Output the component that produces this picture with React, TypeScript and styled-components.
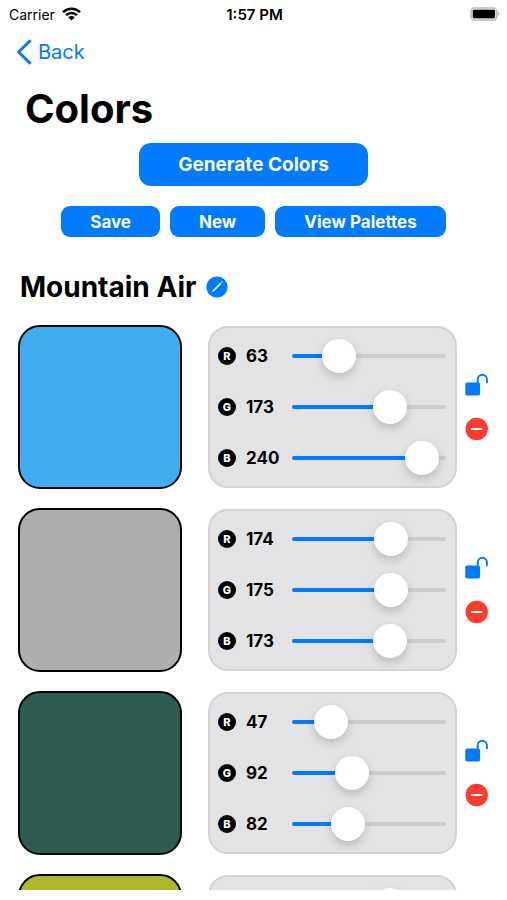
import React, { useState } from 'react';
import styled, { createGlobalStyle } from 'styled-components';

const BLUE = '#007aff';
const RED = '#ff3b30';

const GlobalStyle = createGlobalStyle`
  *, *::before, *::after { box-sizing: border-box; }
  body {
    margin: 0;
    background: #fff;
    color: #000;
    font-family: Inter, "Liberation Sans", sans-serif;
  }
  button, input { font: inherit; }
`;

const Screen = styled.div`
  display: flex;
  flex-direction: column;
  height: 100vh;
  padding-bottom: 10px;
`;

const StatusBar = styled.div`
  display: grid;
  grid-template-columns: 1fr auto 1fr;
  align-items: center;
  height: 28px;
  padding: 0 7px 0 9px;
  font-size: 14px;
  flex-shrink: 0;
`;

const Carrier = styled.div`
  display: flex;
  align-items: center;
  gap: 7px;
`;

const Clock = styled.time`
  font-size: 15px;
  font-weight: 600;
`;

const BatterySlot = styled.div`
  display: flex;
  justify-content: flex-end;
`;

const NavBar = styled.nav`
  display: flex;
  align-items: center;
  height: 48px;
  padding: 0 16px;
  flex-shrink: 0;
`;

const BackLink = styled.a`
  display: flex;
  align-items: center;
  gap: 6px;
  color: ${BLUE};
  font-size: 20px;
  text-decoration: none;
`;

const Title = styled.h1`
  margin: 8px 25px 0;
  font-size: 40px;
  line-height: 50px;
  font-weight: 700;
  flex-shrink: 0;
`;

const Actions = styled.div`
  display: flex;
  justify-content: center;
  gap: 10px;
  flex-shrink: 0;
`;

const PrimaryActions = styled(Actions)`
  margin-top: 9px;
`;

const SecondaryActions = styled(Actions)`
  margin-top: 20px;
`;

const ActionButton = styled.button<{ $large?: boolean }>`
  border: 0;
  border-radius: ${(p) => (p.$large ? 12 : 9)}px;
  padding: 0 ${(p) => (p.$large ? 39 : 29)}px;
  height: ${(p) => (p.$large ? 43 : 31)}px;
  background: ${BLUE};
  color: #fff;
  font-size: ${(p) => (p.$large ? 19 : 17)}px;
  font-weight: 700;
  white-space: nowrap;
  cursor: pointer;
`;

const PaletteHeader = styled.div`
  display: flex;
  align-items: center;
  gap: 10px;
  margin: 31px 20px 0;
  flex-shrink: 0;
`;

const PaletteName = styled.h2`
  margin: 0;
  font-size: 28px;
  line-height: 38px;
  font-weight: 700;
`;

const IconButton = styled.button`
  display: flex;
  border: 0;
  padding: 0;
  background: none;
  cursor: pointer;
`;

const ColorList = styled.ul`
  display: flex;
  flex-direction: column;
  gap: 19px;
  flex: 1;
  min-height: 0;
  margin: 19px 0 0;
  padding: 0 18px;
  list-style: none;
  overflow-y: auto;
  scrollbar-width: none;
`;

const ColorRow = styled.li`
  display: grid;
  grid-template-columns: 164px minmax(0, 1fr) 24px;
  column-gap: 8px;
  align-items: center;
  flex-shrink: 0;
`;

const Swatch = styled.div`
  height: 164px;
  border: 2px solid #000;
  border-radius: 22px;
`;

const ChannelPanel = styled.div`
  display: flex;
  flex-direction: column;
  justify-content: center;
  gap: 17px;
  height: 162px;
  margin-left: 18px;
  padding: 0 9px 0 8px;
  border: 2px solid #d3d3d5;
  border-radius: 20px;
  background: #e3e3e5;
`;

const Channel = styled.label`
  display: flex;
  align-items: center;
  height: 34px;
`;

const Badge = styled.span`
  display: flex;
  align-items: center;
  justify-content: center;
  width: 18px;
  height: 18px;
  margin-right: 10px;
  border-radius: 50%;
  background: #000;
  color: #fff;
  font-size: 11px;
  line-height: 18px;
  font-weight: 800;
`;

const Value = styled.output`
  width: 46px;
  font-size: 17px;
  font-weight: 700;
`;

const Slider = styled.input`
  appearance: none;
  flex: 1;
  min-width: 0;
  height: 34px;
  margin: 0;
  background: none;
  cursor: pointer;

  &::-webkit-slider-runnable-track {
    height: 4px;
    border-radius: 2px;
    background: linear-gradient(
      to right,
      ${BLUE} var(--filled),
      #cdcdd0 var(--filled)
    );
  }

  &::-webkit-slider-thumb {
    appearance: none;
    width: 34px;
    height: 34px;
    margin-top: -15px;
    border: 0;
    border-radius: 50%;
    background: #fff;
    box-shadow: 0 4px 10px rgba(0, 0, 0, 0.18);
  }
`;

const RowActions = styled.div`
  display: flex;
  flex-direction: column;
  align-items: center;
  gap: 21px;
`;

const WifiIcon = () => (
  <svg width="19" height="14" viewBox="0 0 19 14" aria-hidden="true">
    <g fill="none" stroke="#000" strokeWidth="2.5">
      <path d="M1 5.1a12.2 12.2 0 0 1 17 0" />
      <path d="M4 8.2a7.9 7.9 0 0 1 11 0" />
    </g>
    <path d="M9.5 13.6 6.2 10.3a4.8 4.8 0 0 1 6.6 0z" />
  </svg>
);

const BatteryIcon = () => (
  <svg width="30" height="14" viewBox="0 0 30 14" aria-hidden="true">
    <rect x="0.9" y="0.9" width="26" height="12.2" rx="3.8" fill="#dcdcdc" stroke="#b9b9b9" strokeWidth="1.4" />
    <rect x="2.8" y="2.8" width="22.2" height="8.4" rx="1.4" />
    <path d="M28 4.8c1.7.4 1.7 4 0 4.4z" fill="#b5b5b5" />
  </svg>
);

const BackIcon = () => (
  <svg width="16" height="26" viewBox="0 0 16 26" fill="none" stroke={BLUE} strokeWidth="3" aria-hidden="true">
    <path d="M14.6 1.2 2.6 13l12 11.8" strokeLinejoin="round" />
  </svg>
);

const EditIcon = () => (
  <svg width="22" height="22" viewBox="0 0 22 22" aria-hidden="true">
    <circle cx="11" cy="11" r="10.6" fill={BLUE} />
    <path d="M7.4 14.7 15 7.1" stroke="#fff" strokeWidth="1.6" />
    <path d="m6 16 .7-2 1.3 1.3zM15 5.8l1.3 1.3.4-.5c.5-.7-.6-1.8-1.2-1.2z" fill="#fff" />
  </svg>
);

const UnlockedIcon = () => (
  <svg width="24" height="23" viewBox="0 0 24 23" aria-hidden="true">
    <rect x="0.3" y="9.6" width="14.8" height="12.9" rx="1.8" fill={BLUE} />
    <path d="M12.7 10.5V6.3a4.6 4.6 0 0 1 9.2 0v3.1" fill="none" stroke={BLUE} strokeWidth="1.9" strokeLinecap="round" />
  </svg>
);

const RemoveIcon = () => (
  <svg width="24" height="24" viewBox="0 0 24 24" aria-hidden="true">
    <circle cx="11.7" cy="12" r="11.2" fill={RED} />
    <path d="M6.9 12h9.6" stroke="#fff" strokeWidth="2" strokeLinecap="round" />
  </svg>
);

type Rgb = [number, number, number];

const CHANNELS = ['R', 'G', 'B'];
const MAX = 255;
const THUMB = 34;

const MOUNTAIN_AIR: Rgb[] = [
  [63, 173, 240],
  [174, 175, 173],
  [47, 92, 82],
  [173, 184, 42],
];

const filledTo = (value: number) => {
  const ratio = value / MAX;
  return `calc(${THUMB / 2}px + (100% - ${THUMB}px) * ${ratio})`;
};

export default function App() {
  const [colors, setColors] = useState<Rgb[]>(MOUNTAIN_AIR);

  const setChannel = (row: number, channel: number, value: number) =>
    setColors((all) =>
      all.map((c, i) => (i === row ? (c.map((v, j) => (j === channel ? value : v)) as Rgb) : c)),
    );

  const removeColor = (row: number) => setColors((all) => all.filter((_, i) => i !== row));

  return (
    <>
      <GlobalStyle />
      <Screen>
        <StatusBar>
          <Carrier>
            Carrier <WifiIcon />
          </Carrier>
          <Clock>1:57 PM</Clock>
          <BatterySlot>
            <BatteryIcon />
          </BatterySlot>
        </StatusBar>
        <NavBar>
          <BackLink href="#back">
            <BackIcon />
            Back
          </BackLink>
        </NavBar>
        <Title>Colors</Title>
        <PrimaryActions>
          <ActionButton $large>Generate Colors</ActionButton>
        </PrimaryActions>
        <SecondaryActions>
          <ActionButton>Save</ActionButton>
          <ActionButton>New</ActionButton>
          <ActionButton>View Palettes</ActionButton>
        </SecondaryActions>
        <PaletteHeader>
          <PaletteName>Mountain Air</PaletteName>
          <IconButton aria-label="Rename palette">
            <EditIcon />
          </IconButton>
        </PaletteHeader>
        <ColorList>
          {colors.map((color, row) => (
            <ColorRow key={row}>
              <Swatch style={{ backgroundColor: `rgb(${color.join(',')})` }} />
              <ChannelPanel>
                {color.map((value, channel) => (
                  <Channel key={channel}>
                    <Badge>{CHANNELS[channel]}</Badge>
                    <Value>{value}</Value>
                    <Slider
                      type="range"
                      aria-label={CHANNELS[channel]}
                      min={0}
                      max={MAX}
                      value={value}
                      onChange={(e) => setChannel(row, channel, Number(e.target.value))}
                      style={{ '--filled': filledTo(value) } as React.CSSProperties}
                    />
                  </Channel>
                ))}
              </ChannelPanel>
              <RowActions>
                <IconButton aria-label="Lock color">
                  <UnlockedIcon />
                </IconButton>
                <IconButton aria-label="Remove color" onClick={() => removeColor(row)}>
                  <RemoveIcon />
                </IconButton>
              </RowActions>
            </ColorRow>
          ))}
        </ColorList>
      </Screen>
    </>
  );
}
